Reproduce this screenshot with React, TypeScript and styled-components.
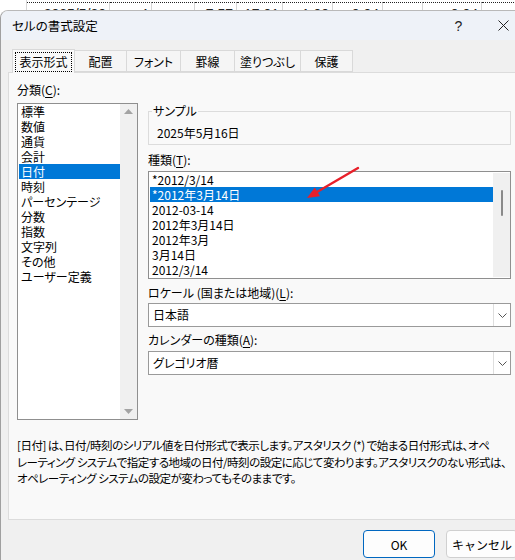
import React from "react"
import styled, { createGlobalStyle } from "styled-components"

const GlobalStyle = createGlobalStyle`
  html, body {
    margin: 0;
    padding: 0;
    background: #fff;
    overflow: hidden;
  }
  body {
    font-family: "Noto Sans CJK JP", "Noto Sans", sans-serif;
    font-size: 12px;
    color: #000;
    font-feature-settings: "palt";
  }
  * { box-sizing: border-box; }
`

// spreadsheet peeking out above the dialog
const Sheet = styled.div`
  display: flex;
  height: 10px;
  overflow: hidden;
  background: #fff;
  width: 530px;
`

const SheetCell = styled.div<{ $w: number; $marked?: boolean }>`
  width: ${p => p.$w}px;
  height: 10px;
  flex: none;
  overflow: hidden;
  border-right: 1px solid #d6d6d6;
  margin-top: ${p => (p.$marked ? 2 : 0)}px;
  border-top: ${p => (p.$marked ? "1px dotted #222" : "none")};
  padding: ${p => (p.$marked ? 4 : 7)}px 3px 0;
  text-align: right;
  font-family: "Liberation Sans", sans-serif;
  font-size: 14px;
  line-height: 14px;
  color: #222;
  white-space: nowrap;
`

const Dialog = styled.div`
  width: 530px;
  border-top: 1px solid #b9b9b9;
  border-left: 1px solid #a0a0a0;
  border-top-left-radius: 8px;
  overflow: hidden;
  background: #f0f0f0;
`

const TitleBar = styled.div`
  height: 29px;
  display: flex;
  align-items: center;
  padding: 0 4px 0 11px;
  background: #eef2f8;
  font-size: 12.5px;
`

const Title = styled.span`
  flex: 1;
`

const TitleButton = styled.div`
  width: 45px;
  display: flex;
  justify-content: center;
  align-items: center;
  font-family: "Liberation Sans", sans-serif;
  font-size: 14px;
  color: #222;
`

const Body = styled.div`
  padding: 10px 8px 0 7px;
`

const Tabs = styled.div`
  display: flex;
  padding-left: 4px;
  height: 22px;
  align-items: flex-end;
`

const Tab = styled.div<{ $w: number; $active?: boolean }>`
  width: ${p => p.$w}px;
  height: ${p => (p.$active ? 24 : 22)}px;
  margin-bottom: ${p => (p.$active ? -1 : 0)}px;
  margin-left: -1px;
  border: 1px solid #d9d9d9;
  border-bottom: ${p => (p.$active ? "none" : "1px solid #d9d9d9")};
  background: ${p => (p.$active ? "#f9f9f9" : "#f5f5f5")};
  display: flex;
  align-items: center;
  justify-content: center;
  position: relative;
  z-index: ${p => (p.$active ? 2 : 1)};
  &:first-child { margin-left: 0; }
`

const FocusRect = styled.span`
  border: 1px dotted #000;
  padding: 1px 3px;
  line-height: 16px;
`

const Panel = styled.div`
  height: 448px;
  background: #f9f9f9;
  border: 1px solid #dcdcdc;
  padding: 9px 10px 0 8px;
  position: relative;
  z-index: 1;
`

const Columns = styled.div`
  display: flex;
  gap: 10px;
`

const LeftColumn = styled.div`
  width: 121px;
  flex: none;
`

const RightColumn = styled.div`
  flex: 1;
  padding-top: 22px;
  display: flex;
  flex-direction: column;
`

const Label = styled.div<{ $top?: number; $gap?: number }>`
  line-height: 16px;
  margin-top: ${p => p.$top ?? 0}px;
  margin-bottom: ${p => p.$gap ?? 3}px;
`

const Key = styled.span`
  text-decoration: underline;
  text-underline-offset: 2px;
`

const ListBox = styled.div<{ $h: number }>`
  height: ${p => p.$h}px;
  border: 1px solid #8f8f8f;
  background: #fff;
  display: flex;
  position: relative;
`

const Items = styled.div`
  flex: 1;
  padding-left: 1px;
  overflow: hidden;
`

const Item = styled.div<{ $selected?: boolean }>`
  height: 15px;
  line-height: 15px;
  padding-left: 2px;
  white-space: nowrap;
  background: ${p => (p.$selected ? "#0078d7" : "transparent")};
  color: ${p => (p.$selected ? "#fff" : "#000")};
`

const ScrollBar = styled.div`
  width: 17px;
  flex: none;
  background: #f0f0f0;
  display: flex;
  flex-direction: column;
  align-items: center;
  justify-content: space-between;
  padding: 5px 0;
`

const ThinScrollBar = styled.div`
  width: 17px;
  flex: none;
  background: #f0f0f0;
  margin: 1px 0;
  padding-top: 17px;
  display: flex;
  justify-content: center;
`

const Thumb = styled.div`
  width: 2px;
  height: 26px;
  border-radius: 1px;
  background: #8a8a8a;
`

const GroupBox = styled.fieldset`
  margin: 0;
  border: 1px solid #dcdcdc;
  padding: 7px 8px 3px;
  min-width: 0;
`

const Legend = styled.legend`
  margin-left: -5px;
  padding: 0 1px;
  line-height: 14px;
`

const SampleValue = styled.div`
  line-height: 16px;
`

const ArrowMark = styled.svg`
  position: absolute;
  left: 150px;
  top: -8px;
  overflow: visible;
`

const Combo = styled.div`
  height: 24px;
  border: 1px solid #9a9a9a;
  background: #fff;
  display: flex;
`

const ComboText = styled.div`
  flex: 1;
  padding-left: 4px;
  line-height: 22px;
`

const ComboButton = styled.div`
  width: 17px;
  border-left: 1px solid #dedede;
  display: flex;
  align-items: center;
  justify-content: center;
`

const Description = styled.div`
  margin-top: 17px;
  font-size: 11.5px;
  letter-spacing: -0.5px;
  line-height: 16.5px;
  white-space: nowrap;
`

const Footer = styled.div`
  display: flex;
  justify-content: flex-end;
  gap: 11px;
  padding: 10px 4px 0 0;
  height: 41px;
`

const Button = styled.button<{ $primary?: boolean }>`
  width: 72px;
  height: 28px;
  border: 1px solid ${p => (p.$primary ? "#0067c0" : "#d0d0d0")};
  border-radius: 4px;
  background: #fdfdfd;
  font-family: inherit;
  font-size: 12px;
  color: #000;
  padding: 0;
`

const Triangle = ({ up }: { up?: boolean }) => (
  <svg width="9" height="5" viewBox="0 0 9 5">
    <path d={up ? "M0 5L4.5 0L9 5Z" : "M0 0L4.5 5L9 0Z"} fill="#a3a3a3" />
  </svg>
)

const Chevron = () => (
  <svg width="9" height="5" viewBox="0 0 9 5">
    <path d="M0.5 0.5L4.5 4.5L8.5 0.5" fill="none" stroke="#555" strokeWidth="1" />
  </svg>
)

const sheetCells: [number, string, boolean][] = [
  [27, "", false],
  [83, "2025/5/20", true],
  [42, "4", true],
  [43, "", true],
  [42, "7.57", true],
  [46, "17.01", true],
  [50, "1.00", true],
  [50, "0.04", true],
  [40, "", true],
  [59, "0.04", true],
  [48, "", true],
]

const categories = ["標準", "数値", "通貨", "会計", "日付", "時刻", "パーセンテージ", "分数", "指数", "文字列", "その他", "ユーザー定義"]
const formats = ["*2012/3/14", "*2012年3月14日", "2012-03-14", "2012年3月14日", "2012年3月", "3月14日", "2012/3/14"]
const tabs: [string, number][] = [["表示形式", 63], ["配置", 53], ["フォント", 55], ["罫線", 55], ["塗りつぶし", 67], ["保護", 53]]

export default function App() {
  return (
    <>
      <GlobalStyle />
      <Sheet>
        {sheetCells.map(([w, text, marked], i) => (
          <SheetCell key={i} $w={w} $marked={marked}>{text}</SheetCell>
        ))}
      </Sheet>
      <Dialog>
        <TitleBar>
          <Title>セルの書式設定</Title>
          <TitleButton>?</TitleButton>
          <TitleButton>
            <svg width="11" height="11" viewBox="0 0 11 11">
              <path d="M0.5 0.5L10.5 10.5M10.5 0.5L0.5 10.5" stroke="#222" strokeWidth="1" />
            </svg>
          </TitleButton>
        </TitleBar>
        <Body>
          <Tabs>
            {tabs.map(([name, w], i) => (
              <Tab key={name} $w={w} $active={i === 0}>
                {i === 0 ? <FocusRect>{name}</FocusRect> : name}
              </Tab>
            ))}
          </Tabs>
          <Panel>
            <Columns>
              <LeftColumn>
                <Label $gap={5}>分類(<Key>C</Key>):</Label>
                <ListBox $h={317}>
                  <Items>
                    {categories.map(c => (
                      <Item key={c} $selected={c === "日付"}>{c}</Item>
                    ))}
                  </Items>
                  <ScrollBar>
                    <Triangle up />
                    <Triangle />
                  </ScrollBar>
                </ListBox>
              </LeftColumn>
              <RightColumn>
                <GroupBox>
                  <Legend>サンプル</Legend>
                  <SampleValue>2025年5月16日</SampleValue>
                </GroupBox>
                <Label $top={7}>種類(<Key>T</Key>):</Label>
                <ListBox $h={108}>
                  <Items>
                    {formats.map((f, i) => (
                      <Item key={i} $selected={i === 1}>{f}</Item>
                    ))}
                  </Items>
                  <ThinScrollBar>
                    <Thumb />
                  </ThinScrollBar>
                  <ArrowMark width="70" height="40" viewBox="0 0 70 40">
                    <line x1="59" y1="4" x2="18" y2="28" stroke="#e8202a" strokeWidth="2.4" strokeLinecap="round" />
                    <path d="M8 34L21 32.3L15.8 23.5Z" fill="#e8202a" />
                  </ArrowMark>
                </ListBox>
                <Label $top={6} $gap={2}>ロケール (国または地域)(<Key>L</Key>):</Label>
                <Combo>
                  <ComboText>日本語</ComboText>
                  <ComboButton><Chevron /></ComboButton>
                </Combo>
                <Label $top={5} $gap={3}>カレンダーの種類(<Key>A</Key>):</Label>
                <Combo>
                  <ComboText>グレゴリオ暦</ComboText>
                  <ComboButton><Chevron /></ComboButton>
                </Combo>
              </RightColumn>
            </Columns>
            <Description>
              [日付] は、日付/時刻のシリアル値を日付形式で表示します。アスタリスク (*) で始まる日付形式は、オペ
              <br />
              レーティング システムで指定する地域の日付/時刻の設定に応じて変わります。アスタリスクのない形式は、
              <br />
              オペレーティング システムの設定が変わってもそのままです。
            </Description>
          </Panel>
          <Footer>
            <Button $primary>OK</Button>
            <Button>キャンセル</Button>
          </Footer>
        </Body>
      </Dialog>
    </>
  )
}
